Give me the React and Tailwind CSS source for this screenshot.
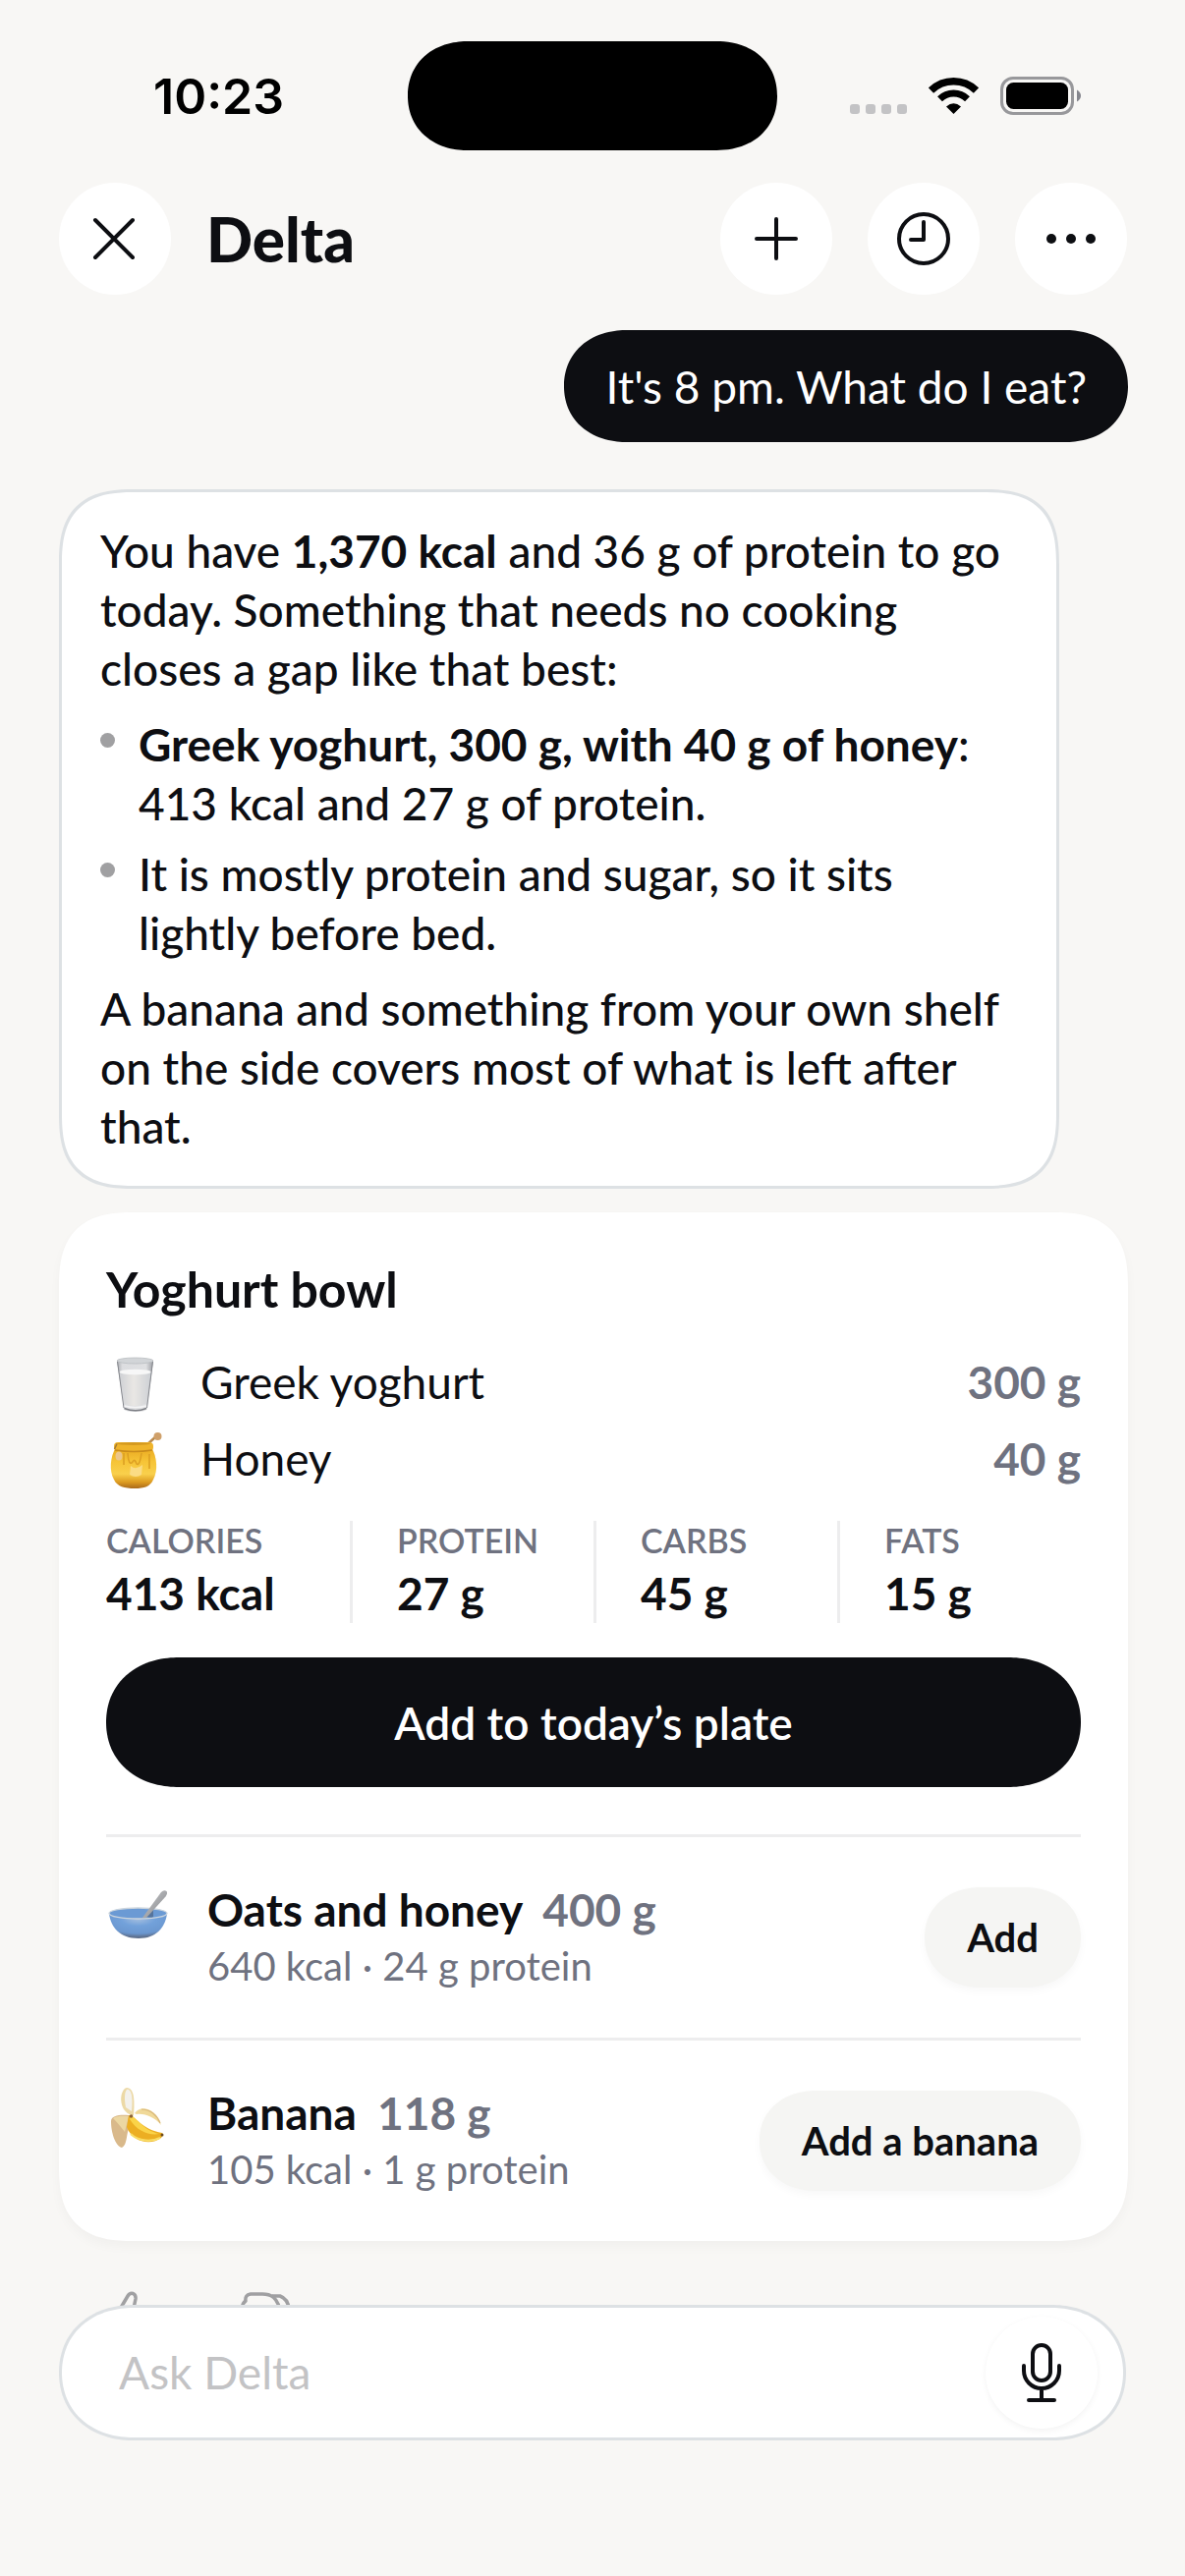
import { useState } from 'react';

const STATS = [
  { label: 'Calories', value: '413 kcal' },
  { label: 'Protein', value: '27 g' },
  { label: 'Carbs', value: '45 g' },
  { label: 'Fats', value: '15 g' },
];

const INGREDIENTS = [
  { name: 'Greek yoghurt', amount: '300 g', Icon: MilkIcon },
  { name: 'Honey', amount: '40 g', Icon: HoneyIcon },
];

const EXTRAS = [
  { name: 'Oats and honey', amount: '400 g', detail: '640 kcal · 24 g protein', action: 'Add', Icon: BowlIcon },
  { name: 'Banana', amount: '118 g', detail: '105 kcal · 1 g protein', action: 'Add a banana', Icon: BananaIcon },
];

function MilkIcon() {
  return (
    <svg viewBox="0 0 60 60" className="size-[60px] overflow-visible" aria-hidden="true">
      <defs>
        <linearGradient id="milk-glass" x1="0" x2="1" y1="0" y2="0">
          <stop offset="0" stopColor="#a9abb0" />
          <stop offset="0.15" stopColor="#dcdde0" />
          <stop offset="0.8" stopColor="#dfe0e2" />
          <stop offset="1" stopColor="#9b9da3" />
        </linearGradient>
        <linearGradient id="milk-fill" x1="0" x2="1" y1="0" y2="0">
          <stop offset="0" stopColor="#cfd1d5" />
          <stop offset="0.45" stopColor="#e9e7e4" />
          <stop offset="1" stopColor="#cdd0d5" />
        </linearGradient>
      </defs>
      <path d="M11 8 L18 57 Q18.500 60 30 60 Q41 60 41.500 57 L48 8 Z" fill="url(#milk-glass)" />
      <ellipse cx="29.500" cy="8" rx="18.500" ry="3" fill="#d2d5d8" stroke="#b9bcc0" strokeWidth="0.800" />
      <path d="M13.500 19 L18.500 52 Q29.500 56 40.500 52 L46 19 Z" fill="url(#milk-fill)" />
      <ellipse cx="29.700" cy="19.500" rx="16.200" ry="2.800" fill="#f7f7f7" />
      <path d="M11.500 9 L18 56" stroke="#85878d" strokeWidth="1" fill="none" />
      <path d="M47.500 9 L41.500 56" stroke="#85878d" strokeWidth="1" fill="none" />
      <path d="M18.500 56.500 Q30 61 41 56.500" stroke="#7c7e84" strokeWidth="1.500" fill="none" />
      <path d="M18.500 54 Q30 57 41 54" stroke="#f4f4f5" strokeWidth="1.500" fill="none" />
    </svg>
  );
}

function HoneyIcon() {
  return (
    <svg viewBox="0 0 60 60" className="size-[60px] overflow-visible" aria-hidden="true">
      <defs>
        <linearGradient id="honey-pot" x1="0" x2="0" y1="0" y2="1">
          <stop offset="0" stopColor="#e9a81f" />
          <stop offset="0.35" stopColor="#f6c437" />
          <stop offset="0.65" stopColor="#f9d04c" />
          <stop offset="0.85" stopColor="#dc9a20" />
          <stop offset="1" stopColor="#a9691b" />
        </linearGradient>
      </defs>
      <path d="M41 16 L51 7" stroke="#b98a4d" strokeWidth="2.500" />
      <ellipse cx="52.500" cy="7" rx="4" ry="4" fill="#cfa06a" />
      <path d="M10 18 C4 28 3 42 8 51 C11 58 19 60 29 60 C39 60 45 58 48 51 C53 42 52 28 46 18 Z" fill="url(#honey-pot)" />
      <rect x="8" y="13" width="40" height="9" rx="4" fill="#efb42b" />
      <ellipse cx="28" cy="14.500" rx="17" ry="1.500" fill="#d4991f" />
      <path d="M9 21 Q28 24 47 21" stroke="#c98b1c" strokeWidth="1.400" fill="none" />
      <path d="M18 24 V36 M22 24 Q23 38 27 33 Q29 29 31 35 Q34 38 36 24 M44 25 V40" stroke="#dda023" strokeWidth="1.600" fill="none" />
      <path d="M25 37 Q30 42 37 36 L36 46 Q30 50 24 46 Z" fill="#fbdc85" />
      <ellipse cx="13" cy="27" rx="3.500" ry="4.500" fill="#ecc68b" />
      <path d="M8.500 20 L11 14.500" stroke="#a37a35" strokeWidth="1.500" />
    </svg>
  );
}

function BowlIcon() {
  return (
    <svg viewBox="0 0 70 70" className="size-[70px]" aria-hidden="true">
      <defs>
        <radialGradient id="bowl-body" cx="0.5" cy="0.2" r="0.75">
          <stop offset="0" stopColor="#a5bfdf" />
          <stop offset="0.4" stopColor="#72a1da" />
          <stop offset="0.8" stopColor="#6b97cf" />
          <stop offset="1" stopColor="#5d6f8c" />
        </radialGradient>
        <linearGradient id="bowl-spoon" x1="0" x2="1" y1="0" y2="1">
          <stop offset="0" stopColor="#c9cacc" />
          <stop offset="1" stopColor="#86888c" />
        </linearGradient>
      </defs>
      <path d="M3 36 C5 50 14 61 33 61 C51 61 60 50 62 36 Z" fill="url(#bowl-body)" />
      <ellipse cx="32.500" cy="35.500" rx="29.500" ry="5.500" fill="#6b9ad4" stroke="#ccd5de" strokeWidth="1.400" />
      <path d="M42 35 L48 31 V39 Q45 40 42 39 Z" fill="#56749c" />
      <path d="M37 40 L56 14 Q59 11 61.500 13 Q63 15 60.500 18.500 L41 40 Z" fill="url(#bowl-spoon)" />
    </svg>
  );
}

function BananaIcon() {
  return (
    <svg viewBox="0 0 70 70" className="size-[70px]" aria-hidden="true">
      <path d="M26 34 C12 30 13 8 21 6 C29 6 29 20 28 34 Z" fill="#ecd9a6" />
      <path d="M20 26 C18 16 19 8 22 7.500 C27 9 27 19 26 30 Z" fill="#f3f1ec" />
      <path d="M29 32 C35 23 51 27 56 44 C49 36 40 32 31 33 Z" fill="#f0d999" />
      <path d="M36 28 C45 28 52 34 55 42" stroke="#d9b878" strokeWidth="1.200" fill="none" />
      <path d="M23 34 C15 33 5 34 5 40 C5 51 9 65 16 67 C22 64 20 53 24 45 Z" fill="#d9b98b" />
      <path d="M7 37 C13 34 18 35 23 35 L19 51 Q12 42 7 37 Z" fill="#ecd7a2" />
      <path d="M23 34 C29 34 37 49 57 52 Q59 54 56 57 C46 65 27 62 21 46 Z" fill="#ecae22" />
      <path d="M25 34 C31 36 37 49 54 53 C44 55 31 50 24 38 Z" fill="#fad348" />
      <path d="M25 53 C33 61 47 61 55 57" stroke="#f9dd67" strokeWidth="2" fill="none" />
      <circle cx="57" cy="54" r="1.500" fill="#6b4a1c" />
      <circle cx="25.500" cy="35" r="1.800" fill="#8c6333" />
    </svg>
  );
}

function StatusBar() {
  return (
    <div className="grid shrink-0 grid-cols-[1fr_376px_1fr] items-center pt-[42px] text-black">
      <time className="pl-[156px] font-['Inter',sans-serif] text-[50px] leading-[60px] font-semibold">10:23</time>
      <div className="h-[111px] rounded-[62px/56px] bg-black [corner-shape:superellipse(1.1)]" />
      <div className="flex items-end justify-end gap-[22px] pr-[106px]">
        <svg viewBox="0 0 58 39" className="h-[39px] w-[58px]" fill="#c3c3c5" aria-hidden="true">
          <rect x="0" y="28" width="10" height="10" rx="3" />
          <rect x="16" y="28" width="10" height="10" rx="3" />
          <rect x="32" y="28" width="10" height="10" rx="3" />
          <rect x="48" y="28" width="10" height="10" rx="3" />
        </svg>
        <svg viewBox="0 0 51 39" className="h-[39px] w-[51px]" aria-hidden="true">
          <path d="M2.500 14 A33 33 0 0 1 48.500 14" fill="none" stroke="#000" strokeWidth="7.500" />
          <path d="M11.500 22.800 A20 20 0 0 1 39.500 22.800" fill="none" stroke="#000" strokeWidth="7" />
          <path d="M25.500 38 L18 30.500 Q25.500 24 33 30.500 Z" />
        </svg>
        <svg viewBox="0 0 82 39" className="h-[39px] w-[82px]" aria-hidden="true">
          <rect x="1.500" y="1.500" width="72" height="36" rx="11.500" fill="none" stroke="#98989b" strokeWidth="3" />
          <rect x="6" y="6" width="63" height="27" rx="7.500" />
          <path d="M78 13.500 Q82 16 82 19.500 Q82 23 78 25.500 Z" fill="#85868d" />
        </svg>
      </div>
    </div>
  );
}

function RoundButton({ label, children }) {
  return (
    <button type="button" aria-label={label} className="flex size-[114px] items-center justify-center rounded-full bg-white">
      <svg viewBox="0 0 60 60" className="size-[60px]" fill="none" stroke="currentColor" strokeWidth="4" strokeLinecap="round" strokeLinejoin="round">
        {children}
      </svg>
    </button>
  );
}

function Header() {
  return (
    <header className="mt-[33px] flex shrink-0 items-center pr-[59px] pl-[60px]">
      <RoundButton label="Close">
        <path d="M10 11 48 49M48 11 10 49" />
      </RoundButton>
      <h1 className="ml-[36px] flex-1 text-[62px] leading-[72px] font-black">Delta</h1>
      <div className="flex gap-[36px]">
        <RoundButton label="New chat">
          <path d="M30 10V50M10 30H50" />
        </RoundButton>
        <RoundButton label="History">
          <circle cx="30" cy="30" r="25" />
          <path d="M30 13V31H17" />
        </RoundButton>
        <RoundButton label="More">
          <g fill="currentColor" stroke="none">
            <circle cx="10" cy="30" r="5" />
            <circle cx="30" cy="30" r="5" />
            <circle cx="50" cy="30" r="5" />
          </g>
        </RoundButton>
      </div>
    </header>
  );
}

function Bullet({ children }) {
  return (
    <li className="flex gap-[24px]">
      <span className="mt-[18px] size-[15px] shrink-0 rounded-full bg-[#a0a0a2]" />
      <span>{children}</span>
    </li>
  );
}

function MealCard() {
  return (
    <section className="mt-[24px] rounded-[77px] bg-white px-[48px] pt-[48px] shadow-[0_6px_12px_rgba(0,0,0,0.03)] [corner-shape:superellipse(1.42)]">
      <h2 className="text-[50px] leading-[60px] font-bold">Yoghurt bowl</h2>

      <ul className="mt-[35px] flex flex-col gap-[18px]">
        {INGREDIENTS.map(({ name, amount, Icon }) => (
          <li key={name} className="flex items-center leading-[60px]">
            <Icon />
            <span className="ml-[36px] flex-1">{name}</span>
            <span className="font-bold text-[#6f7280]">{amount}</span>
          </li>
        ))}
      </ul>

      <dl className="mt-[33px] grid grid-cols-4">
        {STATS.map(({ label, value }) => (
          <div key={label} className="flex flex-col gap-[6px] border-l-3 border-[#ededee] pt-[2px] pl-[45px] first:border-l-0 first:pl-0">
            <dt className="text-[34px] leading-[36px] font-semibold text-[#6f7280] uppercase">{label}</dt>
            <dd className="leading-[60px] font-bold">{value}</dd>
          </div>
        ))}
      </dl>

      <button
        type="button"
        className="mt-[35px] mb-[48px] h-[132px] w-full rounded-[74px/66px] bg-[#0d0e12] font-semibold text-white [corner-shape:superellipse(1.1)]"
      >
        Add to today’s plate
      </button>

      {EXTRAS.map(({ name, amount, detail, action, Icon }) => (
        <div key={name} className="flex items-center border-t-3 border-[#ededee] py-[42px]">
          <div className="self-start">
            <Icon />
          </div>
          <div className="ml-[33px] flex-1 pt-[2px] pb-[4px]">
            <h3 className="leading-[60px] font-bold">
              {name} <span className="ml-[10px] text-[#6f7280]">{amount}</span>
            </h3>
            <p className="text-[40px] leading-[54px] text-[#6f7280]">{detail}</p>
          </div>
          <button
            type="button"
            className="h-[102px] rounded-[58px/51px] bg-[#f5f5f3] px-[43px] text-[40px] font-bold shadow-[0_4px_8px_rgba(0,0,0,0.03)] [corner-shape:superellipse(1.1)]"
          >
            {action}
          </button>
        </div>
      ))}
    </section>
  );
}

function Feedback() {
  return (
    <div className="mt-[51px] flex gap-[72px] pl-[48px] text-[#a0a0a2]">
      <button type="button" aria-label="Good answer">
        <svg viewBox="0 0 60 60" className="size-[60px]" fill="none" stroke="currentColor" strokeWidth="3.500" strokeLinejoin="round">
          <path d="M5 26H14V54H5Z" />
          <path d="M12 22 L22 5 Q24 1.500 27.500 2.500 Q30.500 4 30 8 L27 22 H48 Q54 23 53 29 L49 49 Q47 54 42 54 H14" />
        </svg>
      </button>
      <button type="button" aria-label="Bad answer">
        <svg viewBox="0 0 60 60" className="size-[60px]" fill="none" stroke="currentColor" strokeWidth="3.500" strokeLinejoin="round">
          <path d="M7 17 Q6 13 10 10 Q9 4 15 3 H27 Q34 3 38 6 Q47 14 44 31 Q37 37 31 54 Q24 56 24 46 L26 36 H10 Q2 34 5 27 Q1 21 7 17 Z" />
          <path d="M37 5 H45 Q53 8 54 18 Q54 27 47 32" />
        </svg>
      </button>
    </div>
  );
}

function Composer() {
  const [text, setText] = useState('');

  return (
    <footer className="relative z-10 -mt-[60px] shrink-0 px-[60px] pb-[138px]">
      <form
        onSubmit={(e) => e.preventDefault()}
        className="flex h-[138px] items-center rounded-[76px/69px] border-3 border-[#dde1e4] bg-white pr-[26px] pl-[58px] [corner-shape:superellipse(1.1)]"
      >
        <input
          type="text"
          aria-label="Ask Delta"
          placeholder="Ask Delta"
          value={text}
          onChange={(e) => setText(e.target.value)}
          className="min-w-0 flex-1 bg-transparent leading-[60px] outline-none placeholder:text-[#c3c3c5]"
        />
        <button
          type="button"
          aria-label="Dictate"
          className="flex size-[114px] items-center justify-center rounded-full bg-white shadow-[0_2px_6px_rgba(0,0,0,0.05)]"
        >
          <svg viewBox="0 0 40 60" className="h-[60px] w-[40px]" fill="none" stroke="currentColor" strokeWidth="4" strokeLinecap="round">
            <rect x="11" y="2" width="18" height="36" rx="9" />
            <path d="M2 23v5a18 18 0 0 0 36 0v-5M20 46v11M7 58h26" />
          </svg>
        </button>
      </form>
    </footer>
  );
}

export default function App() {
  return (
    <div className="flex h-dvh flex-col bg-[#f8f7f5] font-['Lato',sans-serif] text-[46px] text-[#0d0e12]">
      <StatusBar />
      <Header />
      <main className="min-h-0 flex-1 overflow-y-auto pt-[36px] pr-[58px] pl-[60px] [scrollbar-width:none]">
        <p className="ml-auto flex h-[114px] w-fit items-center rounded-[64px/57px] bg-[#0d0e12] px-[42px] text-white [corner-shape:superellipse(1.1)]">
          It's 8 pm. What do I eat?
        </p>

        <article className="mt-[48px] mr-[70px] flex flex-col gap-[17px] rounded-[77px] border-3 border-[#dde1e4] bg-white px-[39px] py-[30px] leading-[60px] font-medium [corner-shape:superellipse(1.42)]">
          <p>
            You have <strong className="font-bold">1,370 kcal</strong> and 36 g of protein to go today. Something that
            needs no cooking closes a gap like that best:
          </p>
          <ul className="flex flex-col gap-[12px]">
            <Bullet>
              <strong className="font-bold">Greek yoghurt, 300 g, with 40 g of honey</strong>: 413 kcal and 27 g of protein.
            </Bullet>
            <Bullet>It is mostly protein and sugar, so it sits lightly before bed.</Bullet>
          </ul>
          <p>A banana and something from your own shelf on the side covers most of what is left after that.</p>
        </article>

        <MealCard />
        <Feedback />
      </main>
      <Composer />
    </div>
  );
}
